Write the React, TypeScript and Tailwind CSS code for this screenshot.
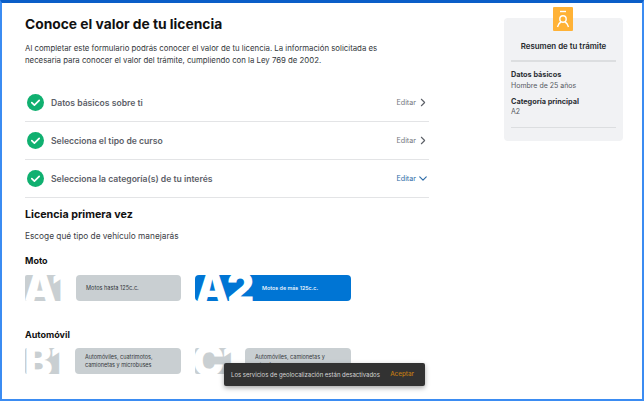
import { ChevronDown, ChevronRight } from "lucide-react";
import type { ReactNode } from "react";

type Step = { label: string; open?: boolean };

const steps: Step[] = [
  { label: "Datos básicos sobre ti" },
  { label: "Selecciona el tipo de curso" },
  { label: "Selecciona la categoría(s) de tu interés", open: true },
];

function CheckBadge() {
  return (
    <svg className="h-[17px] w-[17px] shrink-0" viewBox="0 0 17 17">
      <circle cx="8.5" cy="8.5" r="8.5" fill="#10b070" />
      <path d="M4.8 8.7l2.6 2.5 4.8-4.8" fill="none" stroke="#fff" strokeWidth="1.7" strokeLinecap="round" strokeLinejoin="round" />
    </svg>
  );
}

function StepRow({ step }: { step: Step }) {
  return (
    <div className="flex h-[38px] items-center border-b border-[#e3e4e6] pl-[2px]">
      <CheckBadge />
      <span className="mt-[1px] ml-[7px] text-[8.6px] font-semibold text-[#5c6068]">{step.label}</span>
      <span className={`mt-[1px] ml-auto text-[7.2px] ${step.open ? "text-[#2f6da8]" : "text-[#73777d]"}`}>Editar</span>
      {step.open ? (
        <ChevronDown className="mr-[-1px] h-[13px] w-[14px] text-[#2f6da8]" strokeWidth={2.2} />
      ) : (
        <ChevronRight className="mr-[-1px] h-[13px] w-[14px] text-[#5c6068]" strokeWidth={2} />
      )}
    </div>
  );
}

function A1Card() {
  return (
    <div className="flex h-[26px] w-[156px] overflow-hidden">
      <div className="flex w-[42px] items-center justify-center overflow-hidden rounded-l-[2px] bg-[#c9cfd2] text-[42px] leading-[26px] font-black tracking-[-2px] text-white">
        A1
      </div>
      <div className="ml-[9px] flex flex-1 items-center rounded-[4px] bg-[#c9cfd2] pl-[10px] text-[5.6px] text-[#33373b]">
        Motos hasta 125c.c.
      </div>
    </div>
  );
}

function A2Card() {
  return (
    <div className="flex h-[26px] w-[156px] overflow-hidden rounded-[4px] bg-[#0075d4]">
      <div className="flex w-[58px] items-center justify-center text-[42px] leading-[26px] font-black tracking-[-2px] text-white">
        A2
      </div>
      <div className="flex flex-1 items-center pl-[9px] text-[5.4px] font-medium text-white">
        Motos de más 125c.c.
      </div>
    </div>
  );
}

function GreyCard({ letter, children }: { letter: string; children: ReactNode }) {
  return (
    <div className="flex h-[26px] w-[156px] overflow-hidden">
      <div className="flex w-[42px] items-center justify-center overflow-hidden rounded-l-[2px] bg-[#c9cfd2] text-[42px] leading-[26px] font-black tracking-[-2px] text-white">
        {letter}
      </div>
      <div className="ml-[8px] flex flex-1 items-start rounded-[4px] bg-[#c9cfd2] pt-[5px] pl-[10px] text-[5.5px] leading-[8px] text-[#33373b]">
        <p>{children}</p>
      </div>
    </div>
  );
}

export default function App() {
  return (
    <div className="relative h-[401px] w-[644px] overflow-hidden border-x-[2px] border-t-[3px] border-b-[2px] border-x-[#3b8cf2] border-t-[#0a5ec8] border-b-[#3b8cf2] bg-white font-['Inter',sans-serif] text-[#24272b]">
      <div className="flex">
        {/* Main column */}
        <div className="ml-[23px] w-[404px]">
          <h1 className="mt-[11px] text-[13.8px] leading-[20px] font-bold text-[#111]">Conoce el valor de tu licencia</h1>
          <p className="mt-[8px] text-[7.8px] leading-[12px] text-[#33373b]">
            Al completar este formulario podrás conocer el valor de tu licencia. La información solicitada es
            <br />
            necesaria para conocer el valor del trámite, cumpliendo con la Ley 769 de 2002.
          </p>

          <div className="mt-[18px]">
            {steps.map((step) => (
              <StepRow key={step.label} step={step} />
            ))}
          </div>

          <h2 className="mt-[9px] text-[10.7px] leading-[16px] font-bold text-[#111]">Licencia primera vez</h2>
          <p className="mt-[7px] text-[8.3px] leading-[12px] text-[#3c4046]">Escoge qué tipo de vehículo manejarás</p>

          <h3 className="mt-[13px] text-[9px] leading-[12px] font-bold text-[#111]">Moto</h3>
          <div className="mt-[8px] flex gap-[14px]">
            <A1Card />
            <A2Card />
          </div>

          <h3 className="mt-[28px] text-[9px] leading-[12px] font-bold text-[#111]">Automóvil</h3>
          <div className="mt-[7px] flex gap-[14px]">
            <GreyCard letter="B1">
              Automóviles, cuatrimotos,
              <br />
              camionetas y microbuses
            </GreyCard>
            <GreyCard letter="C1">
              Automóviles, camionetas y
              <br />
              microbuses
            </GreyCard>
          </div>
        </div>

        {/* Summary card */}
        <aside className="relative mt-[15px] ml-[75px] h-[123px] w-[119px] rounded-[4px] bg-[#f1f2f4] px-[7px]">
          <div className="absolute top-[-11px] left-[49px] flex h-[24px] w-[20px] items-center justify-center rounded-[1px] bg-[#ffb236]">
            <svg width="14" height="19" viewBox="0 0 14 19" fill="none" stroke="#fff" strokeWidth="1.4">
              <path d="M4 1.5h6" />
              <circle cx="7" cy="9" r="3.2" />
              <path d="M1.5 17c.6-2.6 2.2-4.4 3.4-5M12.5 17c-.6-2.6-2.2-4.4-3.4-5" />
            </svg>
          </div>
          <h4 className="pt-[23px] text-center text-[7.9px] leading-[11px] font-semibold text-[#24272b]">Resumen de tu trámite</h4>
          <div className="mt-[8px] h-[1.5px] bg-[#dcdee0]" />
          <p className="mt-[8px] text-[7.3px] leading-[10px] font-bold text-[#2b2e33]">Datos básicos</p>
          <p className="mt-[1px] text-[7px] leading-[10px] text-[#55595f]">Hombre de 25 años</p>
          <p className="mt-[6px] text-[7.3px] leading-[10px] font-bold text-[#2b2e33]">Categoría principal</p>
          <p className="text-[7px] leading-[10px] text-[#55595f]">A2</p>
          <div className="mt-[10px] h-[1.5px] bg-[#dcdee0]" />
        </aside>
      </div>

      {/* Toast */}
      <div className="absolute top-[360px] left-[222px] flex h-[23px] w-[201px] items-center rounded-[2px] bg-[#323232] pl-[7px] text-[6px] text-[#d6d6d6] shadow-[0_2px_5px_rgba(0,0,0,0.35)]">
        <span>Los servicios de geolocalización están desactivados</span>
        <span className="ml-auto pr-[11px] text-[6.3px] font-medium text-[#c27c12]">Aceptar</span>
      </div>
    </div>
  );
}
